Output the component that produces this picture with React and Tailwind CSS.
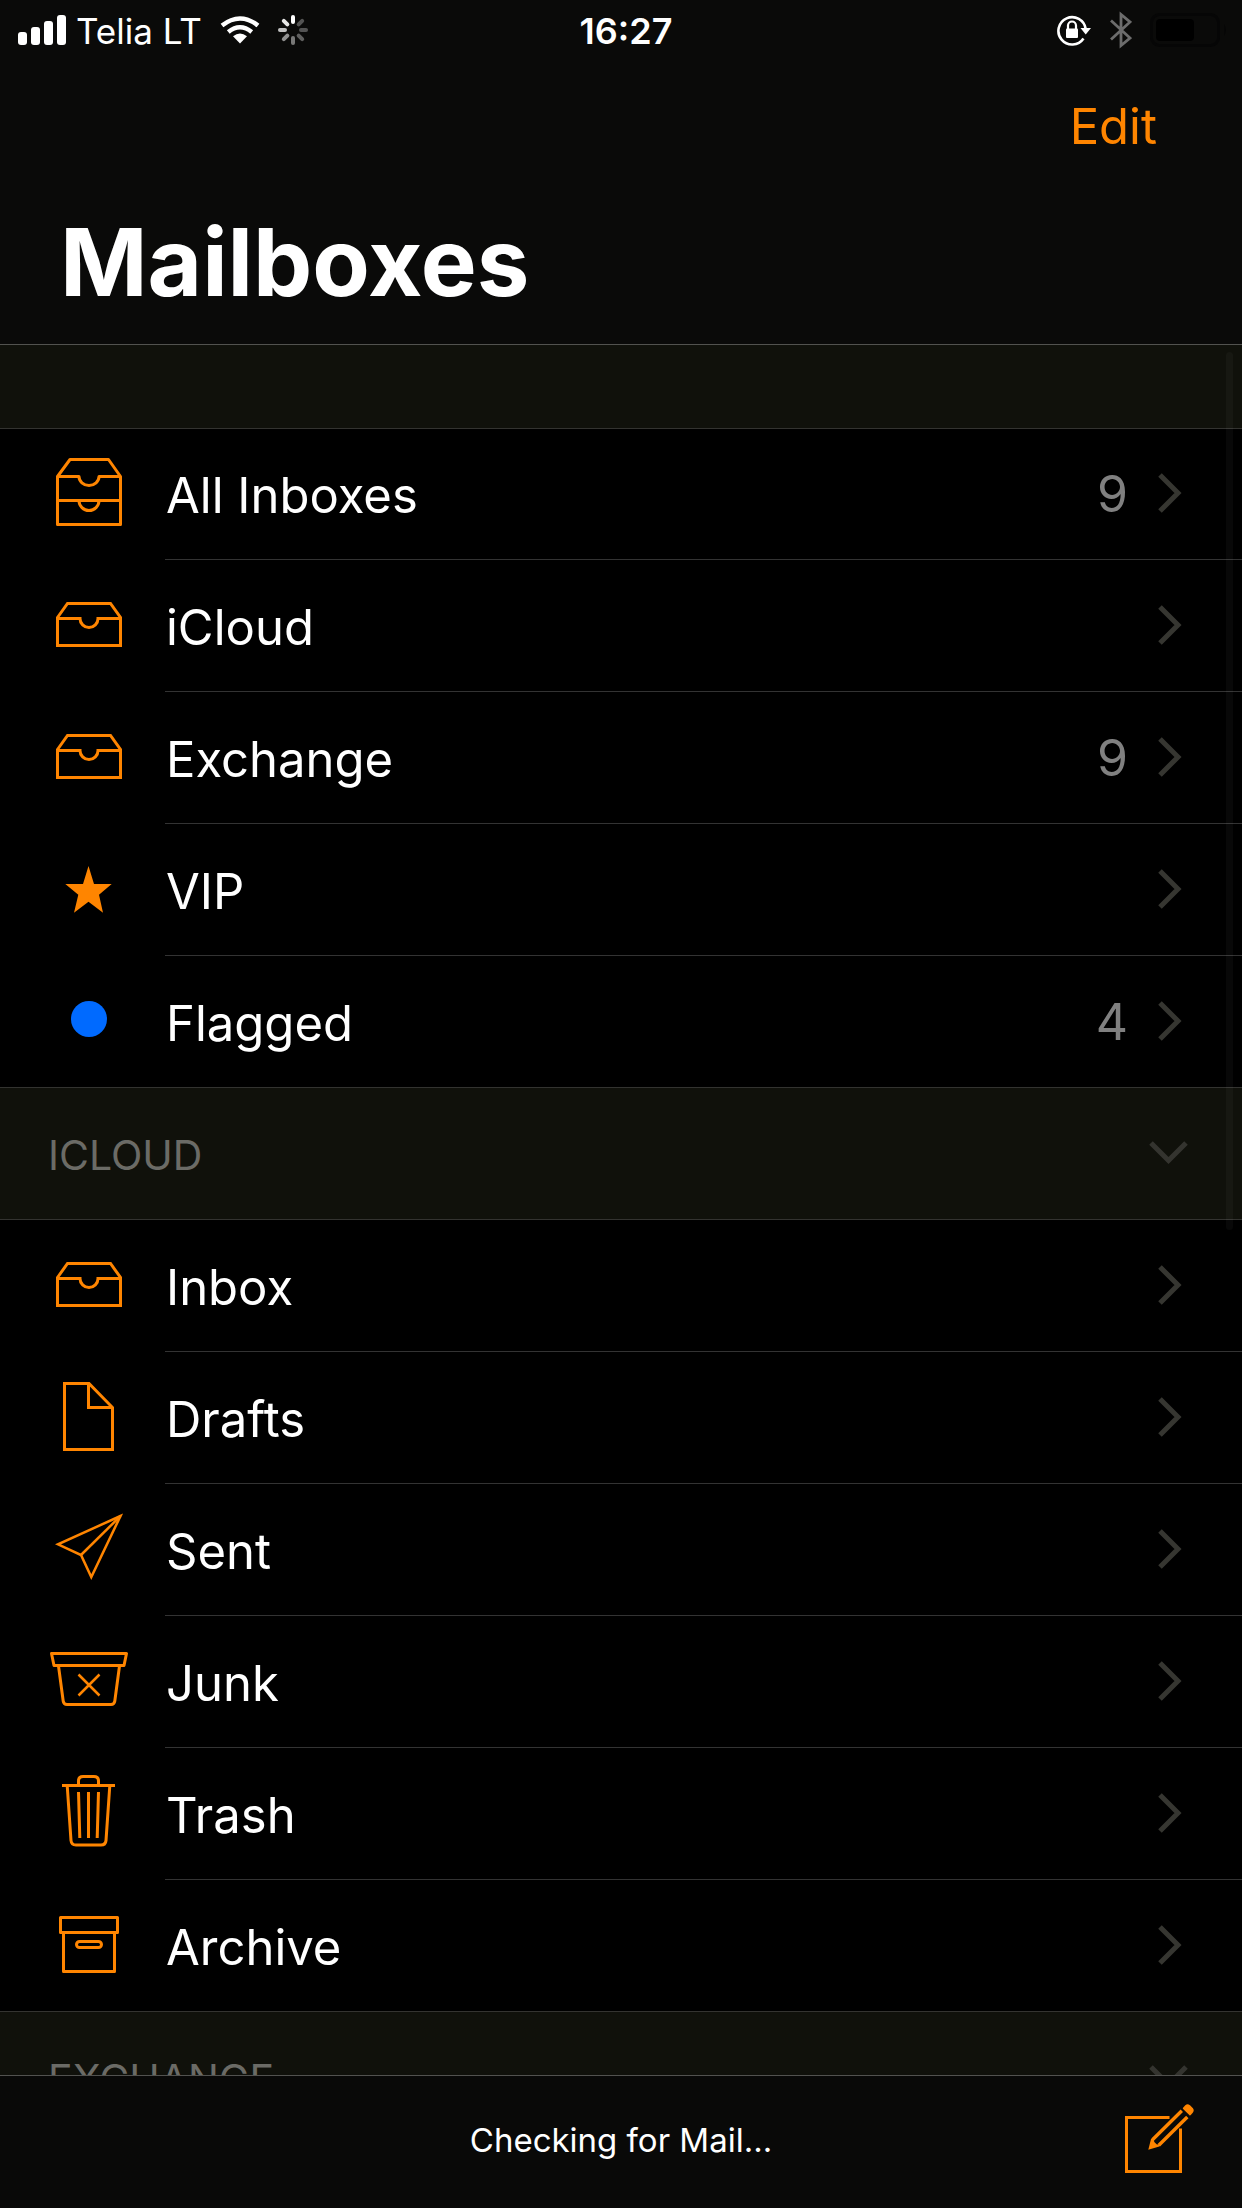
import React, { useState } from 'react';

const ICONS = {
    allInboxes: (
        <g fill="none" stroke="currentColor" strokeWidth="3" strokeLinejoin="round">
            <path d="M10.5 25.5 L23 8.5 H61.5 L73.5 25.5 V73.5 H10.5 Z" />
            <path d="M10.5 25.5 H32 A10 9 0 0 0 52 25.5 H73.5" />
            <path d="M10.5 49.5 H73.5 M32 49.5 A10 10 0 0 0 52 49.5" />
        </g>
    ),
    inbox: (
        <g fill="none" stroke="currentColor" strokeWidth="3">
            <path d="M10.5 34.5 L20.5 20.5 H63.5 L73.5 34.5 V62.5 H10.5 Z" />
            <path d="M10.5 35.5 H33 A9 9 0 0 0 51 35.5 H73.5" />
        </g>
    ),
    star: (
        <path
            fill="currentColor"
            d="M41.5 19 L47 37 H64.7 L52 47.7 L56 65.7 L41.5 54.7 L27 65.7 L31.3 47.7 L18.3 37 H36 Z"
        />
    ),
    dot: <circle cx="42" cy="40" r="18" fill="#006aff" />,
    drafts: (
        <g fill="none" stroke="currentColor" strokeWidth="3">
            <path d="M17.5 8.5 H42 L65.5 32.5 V74.5 H17.5 Z" />
            <path d="M41.5 8.5 V32.5 H65.5" />
        </g>
    ),
    sent: (
        <g fill="none" stroke="currentColor" strokeWidth="2.5">
            <path d="M73.5 9 L11 37.3 L34 48 L44.3 70 Z" />
            <path d="M34 48 L73.5 9" />
        </g>
    ),
    junk: (
        <g fill="none" stroke="currentColor" strokeWidth="3" strokeLinejoin="round">
            <path d="M4.5 14.5 H79.5 L77 26.5 H7 Z" />
            <path d="M11.5 27 L16.2 62 Q16.7 65.5 20 65.5 H64 Q67.3 65.5 67.8 62 L72.5 27" />
            <path strokeWidth="2.5" d="M31.5 35.5 L52.5 56.5 M52.5 35.5 L31.5 56.5" />
        </g>
    ),
    trash: (
        <g fill="none" stroke="currentColor" strokeWidth="3">
            <path d="M15 14.5 H68" />
            <path d="M31.5 14 V10 Q31.5 5.5 36 5.5 H47 Q51.5 5.5 51.5 10 V14" />
            <path d="M20.3 16 L24 69.5 Q24.4 74 29 74 H54 Q58.6 74 59 69.5 L62.7 16" />
            <path d="M31.5 21 L32.8 67 M41.5 21 V67 M51.5 21 L50.2 67" />
        </g>
    ),
    archive: (
        <g fill="none" stroke="currentColor" strokeWidth="3" strokeLinejoin="round">
            <path d="M13.5 14.5 H70.5 V29.5 H13.5 Z" />
            <path d="M16.5 30 V68.5 H67.5 V30" />
            <rect x="29.5" y="38.5" width="25" height="6" rx="3" />
        </g>
    ),
};

const MAILBOXES = [
    { name: 'All Inboxes', icon: 'allInboxes', count: 9 },
    { name: 'iCloud', icon: 'inbox' },
    { name: 'Exchange', icon: 'inbox', count: 9 },
    { name: 'VIP', icon: 'star' },
    { name: 'Flagged', icon: 'dot', count: 4 },
];

const ICLOUD_FOLDERS = [
    { name: 'Inbox', icon: 'inbox' },
    { name: 'Drafts', icon: 'drafts' },
    { name: 'Sent', icon: 'sent' },
    { name: 'Junk', icon: 'junk' },
    { name: 'Trash', icon: 'trash' },
    { name: 'Archive', icon: 'archive' },
];

const SPOKES = [1, 0.3, 0.3, 0.35, 0.45, 0.55, 0.75, 0.9];

const StatusBar = () => (
    <div className="grid h-[60px] grid-cols-3 items-center pl-[18px] pr-[14px] leading-[40px]">
        <div className="flex items-center gap-[10px] text-[35px]">
            <svg className="h-[30px] w-[48px]" viewBox="0 0 48 30" fill="currentColor">
                <rect x="0" y="17" width="9" height="13" rx="3" />
                <rect x="13" y="12" width="9" height="18" rx="3" />
                <rect x="26" y="6" width="9" height="24" rx="3" />
                <rect x="39" y="0" width="9" height="30" rx="3" />
            </svg>
            <span className="pt-[2px]">Telia LT</span>
            <svg className="ml-2 h-[28px] w-[40px]" viewBox="0 0 40 28" fill="none" stroke="currentColor">
                <path strokeWidth="4.5" d="M2 9.5 Q20 -4.5 38 9.5" />
                <path strokeWidth="4.5" d="M8.3 16 Q20 6.5 31.7 16" />
                <path fill="currentColor" stroke="none" d="M13 20.3 Q20 14.5 27 20.3 L20 27.5 Z" />
            </svg>
            <svg className="ml-2 h-[30px] w-[30px]" viewBox="0 0 30 30" stroke="currentColor">
                {SPOKES.map((opacity, i) => (
                    <line
                        key={i}
                        x1="15"
                        y1="2"
                        x2="15"
                        y2="7"
                        strokeWidth="4"
                        strokeLinecap="round"
                        strokeOpacity={opacity}
                        transform={`rotate(${i * 45} 15 15)`}
                    />
                ))}
            </svg>
        </div>
        <time className="pl-[6px] pt-[2px] text-center text-[36px] font-semibold">16:27</time>
        <div className="flex items-center justify-end gap-[18px]">
            <svg className="h-[32px] w-[35px]" viewBox="0 0 35 32" fill="none" stroke="currentColor">
                <path strokeWidth="2.6" d="M26.5 24.5 A13.7 13.7 0 1 1 28.7 15" />
                <path fill="currentColor" stroke="none" d="M23.5 14 H34 L28.7 20.5 Z" />
                <rect x="9" y="14.5" width="12" height="9.5" rx="1" fill="currentColor" stroke="none" />
                <path strokeWidth="2.2" d="M11 15 V11.5 A4 4 0 0 1 19 11.5 V15" />
            </svg>
            <svg className="h-[38px] w-[22px]" viewBox="0 0 22 38" fill="none" stroke="#6c6c6c" strokeWidth="2.8">
                <path d="M1 9.5 L20 27 L11 34.5 V3.5 L20 11 L1 28.5" />
            </svg>
            <svg className="h-[34px] w-[78px]" viewBox="0 0 78 34">
                <rect x="1.5" y="1.5" width="67" height="31" rx="8" fill="none" stroke="#060606" strokeWidth="3" />
                <rect x="6" y="6" width="38" height="22" rx="4" fill="#000" />
                <path d="M74 11 Q78 17 74 23 Z" fill="#060606" />
            </svg>
        </div>
    </div>
);

const MailboxRow = ({ name, icon, count, isLast }) => (
    <li className={isLast ? 'border-b border-[#333330]' : ''}>
        <a href="#" className="flex items-start gap-[34px] pl-[47px]">
            <svg className="mt-[23px] h-[85px] w-[84px] shrink-0 text-[#ff8500]" viewBox="0 0 84 85">
                {ICONS[icon]}
            </svg>
            <div
                className={`flex flex-1 items-center pr-[60px] ${isLast ? 'h-[131px]' : 'h-[132px] border-b border-[#333333]'}`}
            >
                <span className="flex-1 pl-px pt-[4px] text-[49px] leading-[61px]">{name}</span>
                {count && (
                    <span className="mr-[30px] pt-[2px] text-[50px] leading-[61px] text-[#808080]">{count}</span>
                )}
                <svg className="h-[41px] w-[24px]" viewBox="0 0 24 41" fill="none" stroke="#363631" strokeWidth="5">
                    <path d="M2 2 L20 20 L2 38" />
                </svg>
            </div>
        </a>
    </li>
);

const MailboxList = ({ items }) => (
    <ul>
        {items.map((item, i) => (
            <MailboxRow key={item.name} {...item} isLast={i === items.length - 1} />
        ))}
    </ul>
);

const AccountSection = ({ title, items }) => {
    const [isOpen, setIsOpen] = useState(true);

    return (
        <section>
            <h2>
                <button
                    type="button"
                    aria-expanded={isOpen}
                    onClick={() => setIsOpen(!isOpen)}
                    className="flex h-[132px] w-full items-center justify-between border-b border-[#333330] bg-[#10110b] pl-[48px] pr-[54px] text-[41px] leading-[50px] text-[#6b6b66]"
                >
                    <span className="pt-[2px]">{title}</span>
                    <svg className="h-[25px] w-[39px]" viewBox="0 0 39 25" fill="none" stroke="#34342f" strokeWidth="5">
                        <path d="M2 2 L19.5 19.5 L37 2" />
                    </svg>
                </button>
            </h2>
            {isOpen && <MailboxList items={items} />}
        </section>
    );
};

const ComposeIcon = () => (
    <svg className="h-[80px] w-[80px]" viewBox="0 0 80 80" fill="none" stroke="currentColor" strokeWidth="3">
        <path d="M49.5 17.5 H6.5 V71.5 H60.5 V28.5" />
        <path strokeWidth="3.4" d="M32.5 39.7 L61.8 10.8 M38.8 45.3 L67.3 17" />
        <path
            fill="currentColor"
            stroke="none"
            d="M28.3 49.7 L31 39 L33.5 38.5 L34.3 42 L36.6 44.3 L40.3 45 L39.3 46.5 Z"
        />
        <path
            fill="currentColor"
            strokeWidth="2"
            strokeLinejoin="round"
            d="M63.8 8.4 L66 6 Q67.5 4.6 69.3 6 L72 8.7 Q73.4 10.4 72 12 L70 14.4 Z"
        />
    </svg>
);

const App = () => {
    return (
        <div className="flex h-screen flex-col bg-black font-['Inter',sans-serif] text-white">
            <header className="shrink-0 border-b border-[#52524f] bg-[#0a0a09]">
                <StatusBar />
                <div className="flex h-[132px] items-center justify-end pr-[85px]">
                    <button type="button" className="text-[49px] leading-[61px] text-[#ff8500]">Edit</button>
                </div>
                <h1 className="px-[60px] pb-[22px] pt-[10px] text-[94px] font-bold leading-[120px]">Mailboxes</h1>
            </header>

            <main className="relative min-h-0 flex-1 overflow-hidden">
                <div className="-mb-px h-[84px] border-b border-[#333330] bg-[#10110b]" />
                <MailboxList items={MAILBOXES} />
                <AccountSection title="ICLOUD" items={ICLOUD_FOLDERS} />
                <AccountSection title="EXCHANGE" items={[]} />
                <div className="absolute right-[9px] top-[7px] h-[878px] w-[7px] rounded-full bg-white/3" />
            </main>

            <footer className="grid h-[133px] shrink-0 grid-cols-[1fr_auto_1fr] items-center border-t border-[#52524f] bg-[#090908] pb-[4px] pr-[42px]">
                <p className="col-start-2 pl-[42px] text-[33px] leading-[40px]">Checking for Mail...</p>
                <button type="button" aria-label="Compose" className="justify-self-end text-[#ff8500]">
                    <ComposeIcon />
                </button>
            </footer>
        </div>
    );
};

export default App;
